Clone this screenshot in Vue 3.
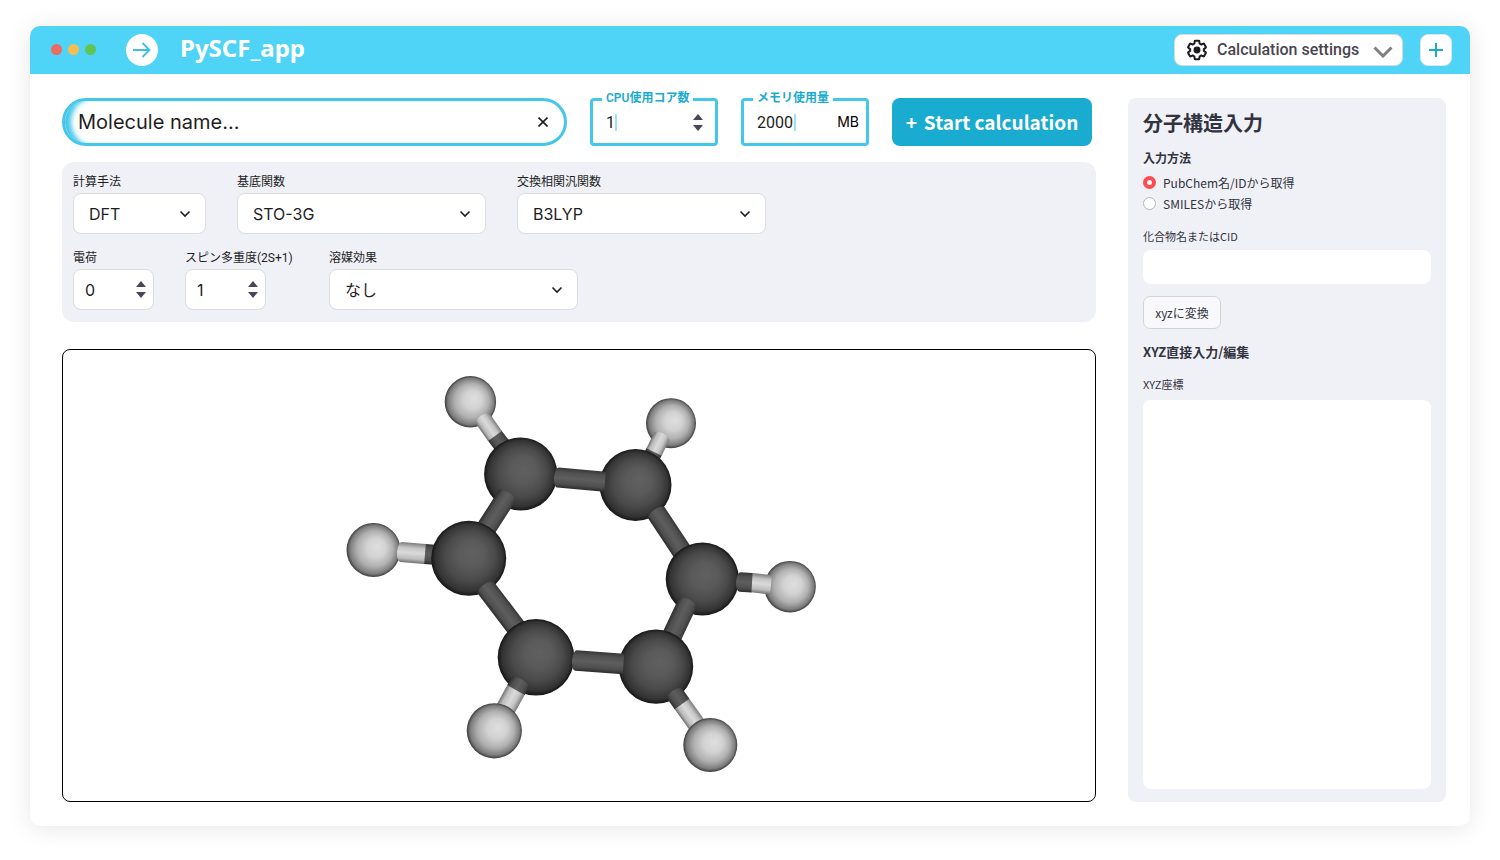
<script setup>
import { ref } from 'vue'

const molecule = ref('')
const cores = ref('1')
const memory = ref('2000')
const method = ref('DFT')
const basis = ref('STO-3G')
const functional = ref('B3LYP')
const solvent = ref('なし')
const charge = ref(0)
const spin = ref(1)
const source = ref('pubchem')
const compound = ref('')
const xyz = ref('')

const atom = (kind, x, y, r) => ({ type: 'atom', kind, x, y, r })
const bond = (w, ...stops) => {
  const parts = []
  for (let i = 0; i + 1 < stops.length; i++) {
    const [x1, y1, kind] = stops[i]
    const [x2, y2] = stops[i + 1]
    parts.push({
      kind,
      len: Math.hypot(x2 - x1, y2 - y1),
      place: `translate(${x1} ${y1}) rotate(${(Math.atan2(y2 - y1, x2 - x1) * 180) / Math.PI})`
    })
  }
  return { type: 'bond', w, parts: parts.reverse() }
}
const tube = (w, len) =>
  `M0 ${-w / 2}H${len}V${w / 2}H0A4 ${w / 2} 0 0 1 0 ${-w / 2}Z`

// Back-to-front paint order
const scene = [
  atom('h', 470.4, 401.8, 25.7),
  bond(17, [483, 419, 'h'], [495, 436, 'c'], [504, 448]),
  atom('c', 520.7, 474, 36.6),
  atom('h', 373.5, 550, 27),
  bond(20, [401, 552, 'h'], [425, 554, 'c'], [438, 555]),
  bond(20, [507, 496, 'c'], [478, 541]),
  atom('c', 468.7, 558.3, 37.5),
  bond(20, [486, 588, 'c'], [518, 630]),
  atom('c', 536, 657.3, 38.3),
  bond(20, [520, 683, 'c'], [516, 690, 'h'], [505, 710]),
  atom('h', 494.3, 730.8, 27.6),
  atom('h', 671, 423.2, 25),
  bond(17, [661.5, 437, 'h'], [654, 452, 'c'], [649, 462]),
  atom('c', 635.5, 485, 36),
  bond(20, [558, 477.5, 'c'], [605, 481.7]),
  bond(20, [656.5, 513, 'c'], [683, 553]),
  atom('c', 702.3, 579, 36.6),
  bond(20, [687.5, 603, 'c'], [671, 638]),
  atom('c', 656, 666.6, 37.2),
  bond(20.6, [576, 660.6, 'c'], [623.5, 664]),
  bond(18, [675, 694, 'c'], [682, 704, 'h'], [697, 725]),
  atom('h', 710.3, 745, 27),
  atom('h', 790, 586.7, 25.8),
  bond(19.4, [740, 582, 'c'], [752, 582.7, 'h'], [771, 584.8])
]
</script>

<template>
  <div class="page">
    <div class="window">
      <header class="titlebar">
        <div class="dots"><i class="dot red"></i><i class="dot amber"></i><i class="dot green"></i></div>
        <button class="go" type="button" aria-label="Go">
          <svg width="20" height="20" viewBox="0 0 20 20"><path d="M1 10H18M10.5 3L17.5 10L10.5 17" /></svg>
        </button>
        <h1>PySCF_app</h1>
        <button class="settings" type="button">
          <svg class="gear" width="22" height="22" viewBox="0 0 24 24">
            <path d="M19.43 12.98c.04-.32.07-.64.07-.98s-.03-.66-.07-.98l2.11-1.65c.19-.15.24-.42.12-.64l-2-3.46c-.09-.16-.26-.25-.44-.25-.06 0-.12.01-.17.03l-2.49 1c-.52-.4-1.08-.73-1.69-.98l-.38-2.65C14.46 2.18 14.25 2 14 2h-4c-.25 0-.46.18-.49.42l-.38 2.65c-.61.25-1.17.59-1.69.98l-2.49-1c-.06-.02-.12-.03-.18-.03-.17 0-.34.09-.43.25l-2 3.46c-.13.22-.07.49.12.64l2.11 1.65c-.04.32-.07.65-.07.98s.03.66.07.98l-2.11 1.65c-.19.15-.24.42-.12.64l2 3.46c.09.16.26.25.44.25.06 0 .12-.01.17-.03l2.49-1c.52.4 1.08.73 1.69.98l.38 2.65c.03.24.24.42.49.42h4c.25 0 .46-.18.49-.42l.38-2.65c.61-.25 1.17-.59 1.69-.98l2.49 1c.06.02.12.03.18.03.17 0 .34-.09.43-.25l2-3.46c.12-.22.07-.49-.12-.64l-2.11-1.65z" />
            <circle cx="12" cy="12" r="3.8" />
          </svg>
          <span>Calculation settings</span>
          <svg class="down" width="20" height="12" viewBox="0 0 20 12"><path d="M1.5 1.5L10 10L18.5 1.5" /></svg>
        </button>
        <button class="add" type="button" aria-label="Add">
          <svg width="14" height="14" viewBox="0 0 14 14"><path d="M7 0V14M0 7H14" /></svg>
        </button>
      </header>

      <div class="body">
        <main class="main">
          <div class="toolbar">
            <div class="search">
              <input v-model="molecule" type="text" placeholder="Molecule name..." aria-label="Molecule name" />
              <button type="button" aria-label="Clear" @click="molecule = ''">
                <svg width="10" height="10" viewBox="0 0 10 10"><path d="M0.5 0.5L9.5 9.5M9.5 0.5L0.5 9.5" /></svg>
              </button>
            </div>
            <div class="outlined">
              <label for="cores">CPU使用コア数</label>
              <input id="cores" v-model="cores" class="one" type="text" />
              <i class="caret"></i>
              <div class="stepper">
                <button type="button" aria-label="Increase cores" @click="cores++"><svg width="10" height="6" viewBox="0 0 10 6"><path d="M5 0L10 6H0Z" /></svg></button>
                <button type="button" aria-label="Decrease cores" @click="cores--"><svg width="10" height="6" viewBox="0 0 10 6"><path d="M0 0H10L5 6Z" /></svg></button>
              </div>
            </div>
            <div class="outlined">
              <label for="memory">メモリ使用量</label>
              <input id="memory" v-model="memory" class="four" type="text" />
              <i class="caret"></i>
              <span class="unit">MB</span>
            </div>
            <button class="start" type="button"><span>+</span><span>Start calculation</span></button>
          </div>

          <section class="options">
            <div class="row">
              <div class="field">
                <label for="method">計算手法</label>
                <div class="select narrow">
                  <select id="method" v-model="method"><option>DFT</option><option>HF</option></select>
                  <svg width="12" height="8" viewBox="0 0 12 8"><path d="M1.5 1.5L6 6L10.5 1.5" /></svg>
                </div>
              </div>
              <div class="field">
                <label for="basis">基底関数</label>
                <div class="select">
                  <select id="basis" v-model="basis"><option>STO-3G</option></select>
                  <svg width="12" height="8" viewBox="0 0 12 8"><path d="M1.5 1.5L6 6L10.5 1.5" /></svg>
                </div>
              </div>
              <div class="field">
                <label for="functional">交換相関汎関数</label>
                <div class="select">
                  <select id="functional" v-model="functional"><option>B3LYP</option></select>
                  <svg width="12" height="8" viewBox="0 0 12 8"><path d="M1.5 1.5L6 6L10.5 1.5" /></svg>
                </div>
              </div>
            </div>
            <div class="row">
              <div class="field">
                <label for="charge">電荷</label>
                <div class="number">
                  <input id="charge" v-model="charge" type="text" />
                  <div class="stepper">
                    <button type="button" aria-label="Increase charge" @click="charge++"><svg width="10" height="6" viewBox="0 0 10 6"><path d="M5 0L10 6H0Z" /></svg></button>
                    <button type="button" aria-label="Decrease charge" @click="charge--"><svg width="10" height="6" viewBox="0 0 10 6"><path d="M0 0H10L5 6Z" /></svg></button>
                  </div>
                </div>
              </div>
              <div class="field spin">
                <label for="spin">スピン多重度(2S+1)</label>
                <div class="number">
                  <input id="spin" v-model="spin" type="text" />
                  <div class="stepper">
                    <button type="button" aria-label="Increase spin" @click="spin++"><svg width="10" height="6" viewBox="0 0 10 6"><path d="M5 0L10 6H0Z" /></svg></button>
                    <button type="button" aria-label="Decrease spin" @click="spin--"><svg width="10" height="6" viewBox="0 0 10 6"><path d="M0 0H10L5 6Z" /></svg></button>
                  </div>
                </div>
              </div>
              <div class="field">
                <label for="solvent">溶媒効果</label>
                <div class="select">
                  <select id="solvent" v-model="solvent"><option>なし</option></select>
                  <svg width="12" height="8" viewBox="0 0 12 8"><path d="M1.5 1.5L6 6L10.5 1.5" /></svg>
                </div>
              </div>
            </div>
          </section>

          <section class="viewer" aria-label="Molecule viewer">
            <svg width="480" height="411" viewBox="339 370 480 411">
              <defs>
                <radialGradient id="atom-c" cx="0.5" cy="0.5" r="0.51" fx="0.56" fy="0.42">
                  <stop offset="0" stop-color="#606060" />
                  <stop offset="0.35" stop-color="#5a5a5a" />
                  <stop offset="0.65" stop-color="#4a4a4a" />
                  <stop offset="0.88" stop-color="#333" />
                  <stop offset="1" stop-color="#101010" />
                </radialGradient>
                <radialGradient id="atom-h" cx="0.5" cy="0.5" r="0.51" fx="0.58" fy="0.44">
                  <stop offset="0" stop-color="#dfdfdf" />
                  <stop offset="0.35" stop-color="#d2d2d2" />
                  <stop offset="0.65" stop-color="#b0b0b0" />
                  <stop offset="0.88" stop-color="#7c7c7c" />
                  <stop offset="1" stop-color="#303030" />
                </radialGradient>
                <linearGradient id="tube-c" x1="0" y1="0" x2="0" y2="1">
                  <stop offset="0" stop-color="#363636" />
                  <stop offset="0.2" stop-color="#505050" />
                  <stop offset="0.5" stop-color="#5e5e5e" />
                  <stop offset="0.8" stop-color="#4e4e4e" />
                  <stop offset="1" stop-color="#2c2c2c" />
                </linearGradient>
                <linearGradient id="tube-h" x1="0" y1="0" x2="0" y2="1">
                  <stop offset="0" stop-color="#7c7c7c" />
                  <stop offset="0.25" stop-color="#c4c4c4" />
                  <stop offset="0.5" stop-color="#dadada" />
                  <stop offset="0.8" stop-color="#bcbcbc" />
                  <stop offset="1" stop-color="#707070" />
                </linearGradient>
              </defs>
              <template v-for="(item, i) in scene" :key="i">
                <circle v-if="item.type === 'atom'" :cx="item.x" :cy="item.y" :r="item.r" :fill="`url(#atom-${item.kind})`" />
                <template v-else>
                  <path v-for="(p, j) in item.parts" :key="j" :d="tube(item.w, p.len)" :transform="p.place" :fill="`url(#tube-${p.kind})`" />
                </template>
              </template>
            </svg>
          </section>
        </main>

        <aside class="side">
          <h2>分子構造入力</h2>
          <fieldset>
            <legend>入力方法</legend>
            <label><input v-model="source" type="radio" name="source" value="pubchem" />PubChem名/IDから取得</label>
            <label><input v-model="source" type="radio" name="source" value="smiles" />SMILESから取得</label>
          </fieldset>
          <label class="caption" for="compound">化合物名またはCID</label>
          <input id="compound" v-model="compound" class="text" type="text" />
          <button class="convert" type="button">xyzに変換</button>
          <h3>XYZ直接入力/編集</h3>
          <label class="caption" for="xyz">XYZ座標</label>
          <textarea id="xyz" v-model="xyz"></textarea>
        </aside>
      </div>
    </div>
  </div>
</template>

<style>
body {
  margin: 0;
  background: #fff;
}
</style>

<style scoped>
* {
  box-sizing: border-box;
}
.page {
  display: flex;
  min-height: 100vh;
  padding: 26px 30px 34px;
  font-family: Inter, "Noto Sans CJK JP", sans-serif;
  color: #1e1e1e;
}
button,
input,
select,
textarea {
  margin: 0;
  padding: 0;
  border: 0;
  outline: 0;
  background: none;
  font: inherit;
  color: inherit;
}
svg {
  display: block;
  flex: none;
}
.window {
  flex: 1;
  display: flex;
  flex-direction: column;
  min-width: 0;
  border-radius: 10px;
  background: #fff;
  box-shadow: 0 2px 24px rgba(0, 0, 0, 0.1);
}
.titlebar {
  display: flex;
  align-items: center;
  height: 48px;
  padding: 0 18px 0 21px;
  border-radius: 10px 10px 0 0;
  background: #4fd4f7;
}
.dots {
  display: flex;
  gap: 6px;
  margin-right: 30px;
  padding-bottom: 1px;
}
.dot {
  width: 11px;
  height: 11px;
  border-radius: 50%;
}
.red { background: #ed6b60; }
.amber { background: #f5bd4f; }
.green { background: #61c454; }
.go {
  display: grid;
  place-items: center;
  width: 32px;
  height: 32px;
  border-radius: 50%;
  background: #fff;
}
.go path {
  fill: none;
  stroke: #3bbfe3;
  stroke-width: 1.8;
}
h1 {
  margin: 0 auto 0 22px;
  padding-bottom: 4px;
  font: 700 24px/32px "Noto Sans", sans-serif;
  color: #fff;
}
.settings {
  display: flex;
  align-items: center;
  width: 229px;
  height: 32px;
  margin-right: 17px;
  padding: 0 9px 0 11px;
  border: 1px solid #d9d9d9;
  border-radius: 8px;
  background: #fff;
  font: 500 16px/24px Roboto, sans-serif;
  color: #49454f;
}
.settings span {
  margin: 0 auto 0 9px;
}
.gear path {
  fill: none;
  stroke: #1d1b20;
  stroke-width: 2.2;
}
.gear circle {
  fill: #1d1b20;
}
.down {
  position: relative;
  top: 2px;
}
.down path {
  fill: none;
  stroke: #808080;
  stroke-width: 3;
}
.add {
  display: grid;
  place-items: center;
  width: 32px;
  height: 32px;
  border: 1px solid #d9e6ea;
  border-radius: 8px;
  background: #fff;
}
.add path {
  stroke: #1aabd0;
  stroke-width: 2;
}
.body {
  flex: 1;
  display: flex;
  gap: 32px;
  padding: 24px 24px 24px 32px;
}
.main {
  flex: 1;
  display: flex;
  flex-direction: column;
  min-width: 0;
}
.toolbar {
  display: flex;
  gap: 23px;
  padding-right: 4px;
}
.search {
  flex: 1;
  display: flex;
  align-items: center;
  min-width: 0;
  height: 48px;
  padding: 0 16px 0 13px;
  border: 3px solid #45c7ea;
  border-radius: 24px;
  box-shadow: inset 10px 0 5px -4px #45c7ea;
}
.search input {
  flex: 1;
  min-width: 0;
  font-size: 20px;
  line-height: 30px;
}
.search input::placeholder {
  color: #1e1e1e;
  opacity: 1;
}
.search path {
  stroke: #1e1e1e;
  stroke-width: 1.6;
}
.outlined {
  position: relative;
  display: flex;
  align-items: center;
  width: 128px;
  height: 48px;
  padding: 0 7px 0 13px;
  border: 3px solid #45c7ea;
  border-radius: 4px;
  font-family: Roboto, sans-serif;
  font-size: 16px;
}
.outlined label {
  position: absolute;
  top: -11px;
  left: 9px;
  padding: 0 4px;
  background: #fff;
  font: 600 12px/16px Roboto, "Noto Sans CJK JP", sans-serif;
  color: #1aabd0;
  white-space: nowrap;
}
.one { width: 9px; }
.four { width: 37px; }
.caret {
  width: 2px;
  height: 17px;
  background: #9be3f6;
}
.unit {
  margin-left: auto;
  font: 14px/20px Inter, sans-serif;
  color: #000;
}
.stepper {
  display: flex;
  flex-direction: column;
  gap: 5px;
  margin-left: auto;
}
.outlined .stepper {
  margin-right: 5px;
}
.stepper path {
  fill: #49455a;
}
.start {
  display: flex;
  align-items: center;
  justify-content: center;
  gap: 7px;
  width: 200px;
  height: 48px;
  border-radius: 8px;
  background: #1aabd0;
  font: 700 19px/28px "Noto Sans CJK JP", sans-serif;
  color: #fff;
  white-space: nowrap;
}
.options {
  display: flex;
  flex-direction: column;
  gap: 16px;
  margin: 16px 0 27px;
  padding: 12px 11px;
  border-radius: 12px;
  background: #f0f1f6;
}
.row {
  display: flex;
  gap: 31px;
}
.field {
  display: flex;
  flex-direction: column;
  gap: 2px;
}
.spin {
  min-width: 113px;
}
.field label {
  font: 12px/17px Roboto, "Noto Sans CJK JP", sans-serif;
}
.select {
  position: relative;
  width: 249px;
}
.narrow {
  width: 133px;
}
.select select {
  width: 100%;
  height: 41px;
  padding: 0 36px 0 15px;
  border: 1px solid #dcdde0;
  border-radius: 8px;
  background: #fff;
  font-size: 16px;
  appearance: none;
}
.select svg {
  position: absolute;
  right: 15px;
  top: 17px;
  pointer-events: none;
}
.select path {
  fill: none;
  stroke: #1e1e1e;
  stroke-width: 1.6;
}
.number {
  display: flex;
  align-items: center;
  width: 81px;
  height: 41px;
  padding: 0 7px 0 11px;
  border: 1px solid #dcdde0;
  border-radius: 8px;
  background: #fff;
}
.number input {
  width: 40px;
  font-size: 16px;
}
.stepper button,
.search button {
  display: block;
}
.viewer {
  flex: 1;
  display: flex;
  align-items: center;
  justify-content: center;
  border: 1px solid #000;
  border-radius: 8px;
}
.side {
  display: flex;
  flex-direction: column;
  width: 318px;
  padding: 10px 15px 13px;
  border-radius: 8px;
  background: #f0f1f6;
  font-family: "Noto Sans CJK JP", sans-serif;
  color: #31333f;
}
h2 {
  margin: 0;
  font-size: 20px;
  line-height: 30px;
  font-weight: 700;
}
fieldset {
  margin: 11px 0 0;
  padding: 0;
  border: 0;
}
legend {
  margin-bottom: 5px;
  padding: 0;
  font-size: 12px;
  line-height: 18px;
  font-weight: 700;
}
fieldset label {
  display: flex;
  align-items: center;
  gap: 7px;
  font-size: 12px;
  line-height: 21px;
}
fieldset input {
  width: 13px;
  height: 13px;
  border: 1px solid #b4b5bd;
  border-radius: 50%;
  background: #fff;
  appearance: none;
}
fieldset input:checked {
  border: 4px solid #ff4b4b;
}
.caption {
  margin-top: 14px;
  font-size: 11px;
  line-height: 16px;
}
.text {
  height: 34px;
  margin-top: 6px;
  padding: 0 10px;
  border-radius: 8px;
  background: #fff;
}
.convert {
  align-self: flex-start;
  min-width: 78px;
  height: 33px;
  margin-top: 12px;
  padding: 0 10px;
  border: 1px solid #d3d4da;
  border-radius: 7px;
  background: #f9f9fb;
  font-size: 12px;
  line-height: 18px;
}
h3 {
  margin: 13px 0 0;
  font-size: 13px;
  line-height: 20px;
  font-weight: 700;
}
textarea {
  flex: 1;
  margin-top: 8px;
  padding: 10px;
  border-radius: 8px;
  background: #fff;
  resize: none;
}
</style>
